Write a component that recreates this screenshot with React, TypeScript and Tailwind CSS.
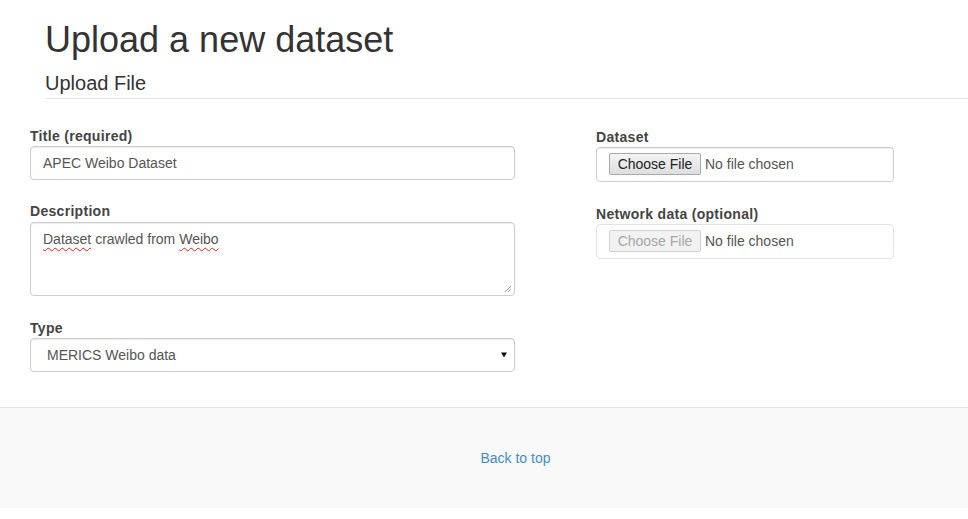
import React from "react";

const sans = { fontFamily: '"Liberation Sans", Arial, sans-serif' };

function Label({ children }: { children: React.ReactNode }) {
  return (
    <div className="h-[20px] text-[14px] leading-[20px] font-bold tracking-[0.3px] text-[#444]">{children}</div>
  );
}

function FileBox({ disabled }: { disabled?: boolean }) {
  return (
    <div
      className={`h-[35px] w-full rounded-[4px] border bg-white pl-[12px] flex items-center ${
        disabled ? "border-[#e3e3e3]" : "border-[#ccc] shadow-[inset_0_1px_1px_rgba(0,0,0,0.075)]"
      }`}
    >
      <div
        className={`h-[22px] w-[92px] rounded-[2px] border flex items-center justify-center text-[14px] leading-none ${
          disabled
            ? "border-[#d2d2d2] bg-[#f2f2f2] text-[#a6a6a6]"
            : "border-[#a9a9a9] bg-gradient-to-b from-[#f4f4f4] to-[#dedede] text-[#222]"
        }`}
      >
        Choose File
      </div>
      <span className="ml-[4px] text-[14px] text-[#555]">No file chosen</span>
    </div>
  );
}

export default function App() {
  return (
    <div className="min-h-[519px] w-[968px] overflow-hidden bg-white text-[#333]" style={sans}>
      <div className="ml-[45px] pt-[20px]">
        <h1 className="text-[36px] leading-[39.6px] font-normal text-[#333]">Upload a new dataset</h1>
        <div className="mt-[10px] h-[29px] border-b border-[#e5e5e5] text-[20px] leading-[27px] text-[#333]">
          Upload File
        </div>
      </div>

      <div className="flex pl-[30px] pt-[27px]">
        <div className="flex w-[485px] flex-col">
          <Label>Title (required)</Label>
          <div className="h-[34px] rounded-[4px] border border-[#ccc] px-[12px] py-[6px] text-[14px] leading-[20px] text-[#555] shadow-[inset_0_1px_1px_rgba(0,0,0,0.075)]">
            APEC Weibo Dataset
          </div>

          <div className="mt-[21px]">
            <Label>Description</Label>
          </div>
          <div className="relative mt-px h-[74px] rounded-[4px] border border-[#ccc] px-[12px] py-[6px] text-[14px] leading-[20px] text-[#555] shadow-[inset_0_1px_1px_rgba(0,0,0,0.075)]">
            <span className="underline decoration-wavy decoration-[#e02020] decoration-1 underline-offset-[3px]">Dataset</span>{" "}
            crawled from{" "}
            <span className="underline decoration-wavy decoration-[#e02020] decoration-1 underline-offset-[3px]">Weibo</span>
            <svg className="absolute bottom-[2px] right-[2px]" width="8" height="8" viewBox="0 0 8 8">
              <line x1="1" y1="7" x2="7" y2="1" stroke="#888" strokeWidth="0.8" />
              <line x1="4" y1="7" x2="7" y2="4" stroke="#888" strokeWidth="0.8" />
            </svg>
          </div>

          <div className="mt-[22px]">
            <Label>Type</Label>
          </div>
          <div className="flex h-[34px] items-center justify-between rounded-[4px] border border-[#ccc] bg-white pl-[16px] pr-[7px] text-[14px] leading-[20px] text-[#555] shadow-[inset_0_1px_1px_rgba(0,0,0,0.075)]">
            <span>MERICS Weibo data</span>
            <svg width="6" height="6" viewBox="0 0 6 6">
              <polygon points="0,0.5 6,0.5 3,5.5" fill="#111" />
            </svg>
          </div>
        </div>

        <div className="ml-[81px] flex w-[298px] flex-col">
          <div className="mt-px">
            <Label>Dataset</Label>
          </div>
          <FileBox />
          <div className="mt-[22px]">
            <Label>Network data (optional)</Label>
          </div>
          <FileBox disabled />
        </div>
      </div>

      <div className="mt-[35px] border-t border-[#e5e5e5] bg-[#f9f9f9] py-[40px] pl-[63px] flex justify-center">
        <a href="#" className="text-[14px] leading-[20px] text-[#428bca]">
          Back to top
        </a>
      </div>
    </div>
  );
}
